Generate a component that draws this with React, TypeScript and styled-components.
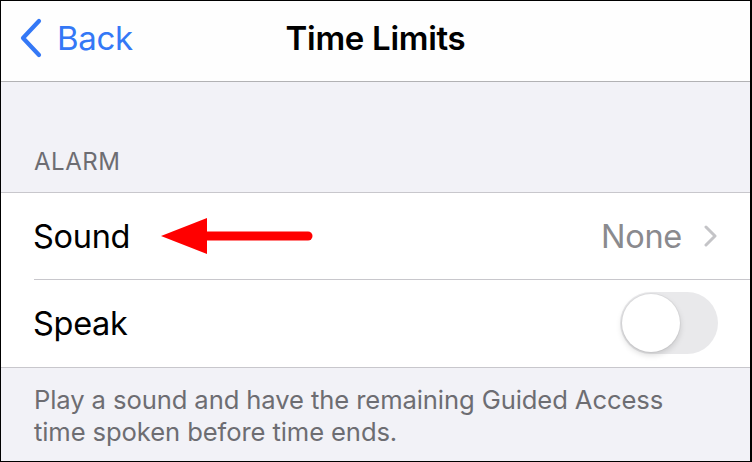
import React from "react";
import styled, { createGlobalStyle } from "styled-components";

const Global = createGlobalStyle`
  html, body { margin: 0; padding: 0; background: #ffffff; }
  * { box-sizing: border-box; }
`;

const Frame = styled.div`
  width: 752px;
  height: 462px;
  border: 1px solid #000;
  border-right-width: 2px;
  display: flex;
  flex-direction: column;
  background: #f2f2f7;
  font-family: Inter, "Liberation Sans", Arial, sans-serif;
  overflow: hidden;
`;

const NavBar = styled.div`
  height: 81px;
  flex: none;
  background: #fefefe;
  border-bottom: 1px solid #b2b2b4;
  display: grid;
  grid-template-columns: 1fr auto 1fr;
  align-items: center;
  padding: 0 18px 7px 18px;
`;

const BackButton = styled.div`
  display: flex;
  align-items: center;
  gap: 14px;
  color: #3478f6;
  font-size: 33px;
  letter-spacing: -0.3px;
`;

const Title = styled.div`
  font-size: 33px;
  font-weight: 600;
  color: #000;
  letter-spacing: -0.3px;
`;

const SectionHeader = styled.div`
  height: 111px;
  flex: none;
  display: flex;
  align-items: flex-end;
  padding: 0 0 16px 33px;
  color: #6d6d72;
  font-size: 24px;
  letter-spacing: 0.5px;
  border-bottom: 1px solid #c8c7cc;
`;

const Group = styled.div`
  background: #fff;
  border-bottom: 1px solid #c8c7cc;
  flex: none;
`;

const Row = styled.div<{ $divider?: boolean; $h: number }>`
  position: relative;
  height: ${(p) => p.$h}px;
  display: flex;
  align-items: center;
  padding: 0 32px 1px 32px;
  font-size: 32.5px;
  color: #000;
  letter-spacing: -0.3px;
  &::after {
    content: "";
    display: ${(p) => (p.$divider ? "block" : "none")};
    position: absolute;
    left: 33px;
    right: 0;
    bottom: 0;
    height: 1px;
    background: #c8c7cc;
  }
`;

const Label = styled.span`
  flex: none;
`;

const Spacer = styled.div`
  flex: 1;
`;

const Value = styled.span`
  color: #8a8a8e;
  margin-right: 22px;
`;

const Toggle = styled.div`
  position: relative;
  width: 98px;
  height: 62px;
  border-radius: 31px;
  background: #e9e9eb;
  &::after {
    content: "";
    position: absolute;
    left: 2px;
    top: 2px;
    width: 58px;
    height: 58px;
    border-radius: 50%;
    background: #fff;
    box-shadow: 0 3px 6px rgba(0, 0, 0, 0.15), 0 0 0 1px rgba(0, 0, 0, 0.04);
  }
`;

const Footer = styled.div`
  padding: 16px 44px 0 33px;
  color: #6d6d72;
  font-size: 25.6px;
  line-height: 32px;
  letter-spacing: -0.1px;
`;

const ArrowWrap = styled.div`
  margin-left: 31px;
  display: flex;
  align-items: center;
`;

export default function App() {
  return (
    <>
      <Global />
      <Frame>
        <NavBar>
          <BackButton>
            <svg width="24" height="40" viewBox="0 0 24 40">
              <path
                d="M20 3 L4 20 L20 37"
                fill="none"
                stroke="#3478f6"
                strokeWidth="4.2"
                strokeLinecap="round"
                strokeLinejoin="round"
              />
            </svg>
            <span>Back</span>
          </BackButton>
          <Title>Time Limits</Title>
          <div />
        </NavBar>
        <SectionHeader>ALARM</SectionHeader>
        <Group>
          <Row $divider $h={87}>
            <Label>Sound</Label>
            <ArrowWrap>
              <svg width="152" height="40" viewBox="0 0 152 40">
                <polygon points="0,20 46,2 46,38" fill="#ff0000" />
                <line x1="40" y1="20" x2="147" y2="20" stroke="#ff0000" strokeWidth="9" strokeLinecap="round" />
              </svg>
            </ArrowWrap>
            <Spacer />
            <Value>None</Value>
            <svg width="14" height="22" viewBox="0 0 14 22">
              <path d="M2 2 L11 11 L2 20" fill="none" stroke="#c4c4c7" strokeWidth="3" strokeLinecap="round" strokeLinejoin="round" />
            </svg>
          </Row>
          <Row $h={87}>
            <Label>Speak</Label>
            <Spacer />
            <Toggle />
          </Row>
        </Group>
        <Footer>
          Play a sound and have the remaining Guided Access time spoken before time ends.
        </Footer>
      </Frame>
    </>
  );
}
